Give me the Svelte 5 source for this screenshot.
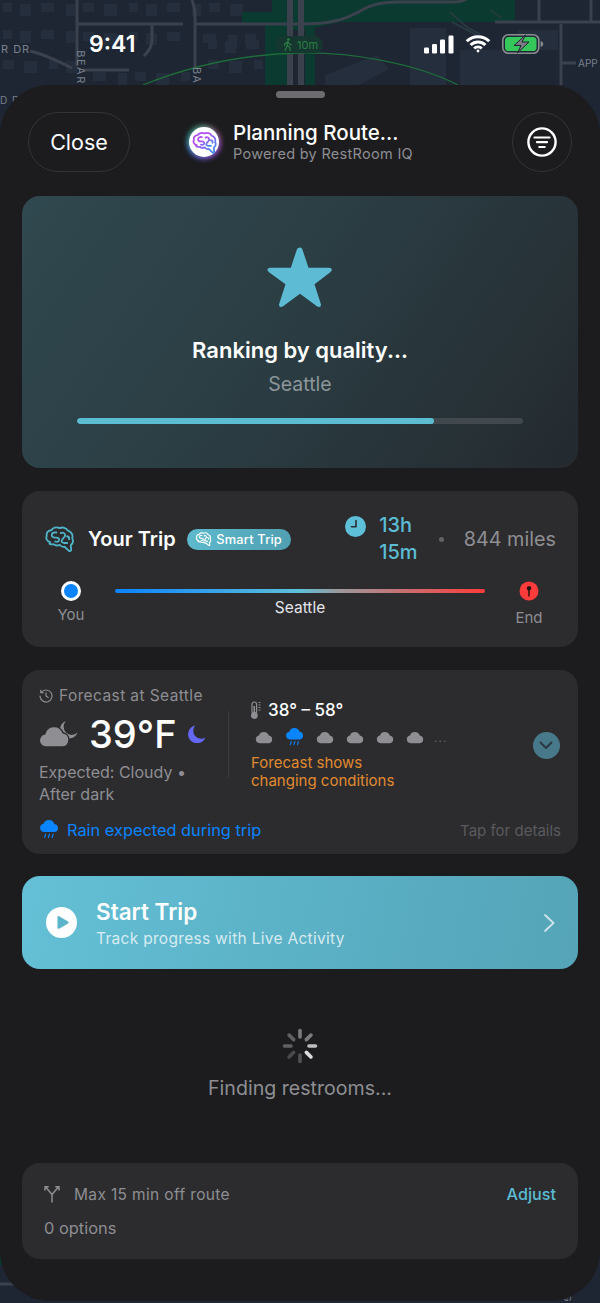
<script>
  const ticks = [
    [0, 0.42], [45, 0.42], [90, 0.72], [135, 0.85],
    [180, 0.24], [225, 0.2], [270, 0.3], [315, 0.3]
  ];
  const blocks = [];
  const rows = [[3, 0, 240], [32, 80, 190], [34, 200, 270], [30, 0, 72], [60, 0, 70], [72, 90, 190], [40, 205, 265], [60, 205, 262]];
  rows.forEach(([y, from, to], r) => {
    for (let x = from + 3, i = 0; x < to; x += 17 + ((i + r) % 3) * 4, i++) {
      blocks.push({ x, y: y + (i % 2), w: 9 + ((i + r) % 3) * 2, h: 9 + (i % 2) * 3 });
    }
  });
  const cloud = 'M6.2 16a5.2 5.2 0 0 1-.9-10.3A7 7 0 0 1 18.4 5.9 5.1 5.1 0 0 1 18.6 16z';
  const brainOutline = 'M4.500 14.500C2 14 .8 11.500 1.800 9.500 1.300 7 3 5 5.500 5 6.500 3 9.500 2 12 3.300 14.500 2.200 17.500 3 18.700 5.300 21.500 6 23 8.800 22.200 11.500 23.200 13.500 22.500 15.800 21 17l.3 3.500c.1 1-.9 1.500-1.700 1l-3.600-3.300c-1.700.3-3-.3-3.700-1.500-1.800.8-3.800.5-5-.6-1.200.3-2.300.2-3.300-.4z';
  const brainInner = 'M9.500 6.800C7.500 6.300 5.500 7.300 5.800 9.200c.2 1.500 2 1.800 3.500 1.700 1.500-.1 2.800.8 2.300 2.200-.4 1-1.800 1.300-3 .9M13 7.300c1.500-.8 3.500 0 3.500 1.700 0 1.800-2.500 2.700-2.800 4.500-.1 1 .8 1.700 2 1.700h2.500M18 9.800c1.200.3 2 1.300 1.700 2.500';
</script>

{#snippet brain(stroke, width)}
  <path d={brainOutline} fill="none" {stroke} stroke-width={width} stroke-linejoin="round" />
  <path d={brainInner} fill="none" {stroke} stroke-width={width} stroke-linecap="round" />
{/snippet}

{#snippet rainCloud(size)}
  <svg class="icon" width={size} height={size} viewBox="0 0 24 24">
    <path d="M6.200 14.500a5 5 0 0 1-.8-9.900A6.900 6.900 0 0 1 18.400 4.800a4.900 4.900 0 0 1 .3 9.700z" fill="#0a84ff" />
    <path d="M8 17l-1.200 4M12.500 17l-1.200 4M17 17l-1.200 4" stroke="#0a84ff" stroke-width="1.400" stroke-linecap="round" />
  </svg>
{/snippet}

{#snippet greyCloud()}
  <svg class="icon" width="18" height="13" viewBox="0 0 24 17"><path d={cloud} fill="#8e8e93" /></svg>
{/snippet}

<div class="screen">
  <svg class="map" width="600" height="1303" viewBox="0 0 600 1303">
    <rect width="600" height="1303" fill="#1e2634" />
    <g fill="#252e3d">
      {#each blocks as b}<rect x={b.x} y={b.y} width={b.w} height={b.h} />{/each}
      <rect x="410" y="28" width="36" height="57" />
      <rect x="460" y="50" width="60" height="35" />
      <rect x="518" y="30" width="40" height="20" />
      <path d="M325 75l52-20 12 14-30 16h-34z" />
    </g>
    <path d="M242 12h30V0h243v22H340l-25 6v57h-10v-55h-18v55h-22V24h-23z" fill="#0a3a30" />
    <g fill="none" stroke="#3b414d" stroke-width="3">
      <path d="M77 0v66M77 24H183M192 0c3 8 3 12 3 20v48M195 24h105c30 0 45-4 62-14 10-6 20-8 35-8h56c10 0 14-3 16-6M495 22h105M539 0v22M591 0v22M561 24v61M562 63h14M152 24v16c0 6-3 11-8 16M30 51c14 3 28 10 42 17M83 70h46" />
      <path d="M290 0v85M301 0v85" stroke-width="6" />
    </g>
    <path d="M450 12l18 16 12 6M452 22l30 16M490 10l12 8" fill="none" stroke="#2a3d42" stroke-width="1.500" />
    <path d="M0 1180h8v85H0z" fill="#0a3a30" />
    <path d="M0 1284h36M590 1250l10 5" stroke="#3b414d" stroke-width="3" fill="none" />
    <path d="M143 85C195 64 250 54 300 53s115 10 158 32" fill="none" stroke="#1f6b3a" stroke-width="1.300" />
    <rect x="276" y="36" width="47" height="17" rx="8.500" fill="#16372f" />
  </svg>

  <span class="maplabel dr">R DR</span>
  <span class="maplabel dd">D D</span>
  <span class="maplabel bear">BEAR</span>
  <span class="maplabel ba">BA</span>
  <span class="maplabel app">APP</span>
  <span class="maplabel ing">ING</span>
  <span class="walk">
    <svg width="10" height="13" viewBox="0 0 10 13"><circle cx="5.400" cy="1.600" r="1.400" fill="#2c7d43" /><path d="M5 3.500L4 8l-2 4.500M4.200 7.500l2.400 1.600.6 3.400M4.600 4L2 5.500 1.500 7.500M5 4l1.500 2 2 .8" fill="none" stroke="#2c7d43" stroke-width="1.200" stroke-linecap="round" /></svg>
    10m
  </span>

  <div class="status">
    <span class="time">9:41</span>
    <div class="status-icons">
      <svg width="30" height="19" viewBox="0 0 30 19" fill="#fff">
        <rect x="0" y="12.500" width="5" height="6" rx="1.200" /><rect x="8" y="9" width="5" height="9.500" rx="1.200" /><rect x="16" y="4.500" width="5" height="14" rx="1.200" /><rect x="24.500" y="0.500" width="5" height="18" rx="1.200" />
      </svg>
      <svg width="26" height="18" viewBox="0 0 26 18" fill="none" stroke="#fff" stroke-width="3">
        <path d="M1.800 6.200a16 16 0 0 1 22.400 0M5.600 10a10.600 10.600 0 0 1 14.800 0M9.200 13.500a5.500 5.500 0 0 1 7.600 0" />
        <circle cx="13" cy="16" r="1.400" fill="#fff" stroke="none" />
      </svg>
      <svg width="42" height="20" viewBox="0 0 42 20">
        <rect x="0.800" y="0.800" width="36" height="18.400" rx="5.500" fill="none" stroke="#8a8d90" stroke-width="1.600" />
        <rect x="3" y="3" width="31.500" height="14" rx="3.600" fill="#35c759" />
        <path d="M38.600 7v6c1.600-.4 2.600-1.600 2.600-3s-1-2.600-2.600-3z" fill="#8a8d90" />
        <path d="M23.500 1L12 11.500h7L15.500 19 27 8h-7z" fill="#7a7e84" stroke="#1e2634" stroke-width="1" />
      </svg>
    </div>
  </div>

  <main class="sheet">
    <div class="handle"></div>

    <header class="header">
      <button class="close">Close</button>
      <div class="title-wrap">
        <div class="logo">
          <svg width="25" height="25" viewBox="0 0 24 24">
            <defs><linearGradient id="lg" x1="0" y1="0" x2="1" y2="1"><stop offset="0.35" stop-color="#b04ff0" /><stop offset="0.95" stop-color="#3d8df5" /></linearGradient></defs>
            {@render brain('url(#lg)', 1.700)}
          </svg>
        </div>
        <div class="title-text">
          <div class="title">Planning Route...</div>
          <div class="subtitle">Powered by RestRoom IQ</div>
        </div>
      </div>
      <button class="filter" aria-label="Filter">
        <svg width="30" height="30" viewBox="0 0 30 30" fill="none" stroke="#fff" stroke-linecap="round">
          <circle cx="15" cy="15" r="13.600" stroke-width="2.400" />
          <path d="M7.500 10.500h15M10 15.200h10M12.300 20h5.400" stroke-width="2.200" />
        </svg>
      </button>
    </header>

    <section class="hero">
      <svg class="star" width="66" height="62" viewBox="0 0 66 62">
        <path d="M33 1.500c1.300 0 2 .8 2.500 2.200l6 18.100h20.300c1.800 0 3 .7 3 2 0 1-.6 1.700-1.500 2.400L47.500 38.200l6.200 19.300c.5 1.600.2 2.800-.8 3.300-1 .5-2.100 0-3.300-.9L33 47.800 16.400 59.900c-1.200.9-2.300 1.400-3.300.9-1-.5-1.300-1.700-.8-3.300l6.200-19.300L2 26.200C1.100 25.500.5 24.800.5 23.800c0-1.300 1.200-2 3-2h20.300l6-18.100C30.300 2.300 31.700 1.500 33 1.500z" fill="#5dbcd3" />
      </svg>
      <div class="hero-title">Ranking by quality...</div>
      <div class="hero-sub">Seattle</div>
      <div class="progress"><div class="progress-fill" style="width: 80%"></div></div>
    </section>

    <section class="card trip">
      <div class="trip-top">
        <svg class="icon" width="31" height="30" viewBox="0 0 24 24">{@render brain('#4fb3c9', 1.450)}</svg>
        <span class="trip-name">Your Trip</span>
        <span class="badge">
          <svg width="17" height="16" viewBox="0 0 24 24">{@render brain('#fff', 1.800)}</svg>
          Smart Trip
        </span>
        <svg class="clock" width="21" height="21" viewBox="0 0 21 21">
          <circle cx="10.500" cy="10.500" r="10.500" fill="#5ec0d8" />
          <path d="M11 4.500v6.300H6.500" fill="none" stroke="#2c2c2e" stroke-width="1.600" stroke-linecap="round" stroke-linejoin="round" />
        </svg>
        <span class="duration">13h<br />15m</span>
        <span class="dot"></span>
        <span class="miles">844 miles</span>
      </div>
      <div class="route">
        <div class="stop">
          <span class="you-dot"></span>
          <span class="stop-label">You</span>
        </div>
        <div class="line-wrap">
          <div class="line"></div>
          <div class="via">Seattle</div>
        </div>
        <div class="stop end">
          <svg class="pin" width="20" height="20" viewBox="0 0 20 20">
            <circle cx="10" cy="10" r="9.500" fill="#ff3b3b" />
            <circle cx="10" cy="7.300" r="2.200" fill="#2a1212" />
            <path d="M10 8v7" stroke="#2a1212" stroke-width="1.500" stroke-linecap="round" />
          </svg>
          <span class="stop-label">End</span>
        </div>
      </div>
    </section>

    <section class="card weather">
      <div class="weather-main">
        <div class="weather-left">
          <div class="forecast-at">
            <svg width="14" height="14" viewBox="0 0 14 14" fill="none" stroke="#8e8e93" stroke-width="1.200" stroke-linecap="round" stroke-linejoin="round">
              <path d="M2.200 3.400A6 6 0 1 1 1 7" /><path d="M1.800 1.400v2.300h2.300M7 3.800V7l2.200 1.400" />
            </svg>
            Forecast at Seattle
          </div>
          <div class="temp-row">
            <svg class="icon" width="39" height="28" viewBox="0 0 39 28">
              <path d="M27 1A9 9 0 1 0 38.500 12.500 8 8 0 0 1 27 1z" fill="#8e8e93" />
              <path d="M7 27a6.600 6.600 0 0 1-1.200-13.100A9.500 9.500 0 0 1 24 12.800 7.200 7.200 0 0 1 24 27z" fill="#8e8e93" stroke="#2c2c2e" stroke-width="1.400" />
            </svg>
            <span class="temp">39°F</span>
            <svg class="icon" width="18" height="18" viewBox="0 0 18 18">
              <path d="M7.200.5A8 8 0 0 0 17.500 12.500 9 9 0 1 1 7.200.5z" fill="#6467f2" />
            </svg>
          </div>
          <div class="expected">Expected: Cloudy •<br />After dark</div>
        </div>
        <div class="weather-right">
          <div class="range">
            <svg width="10" height="19" viewBox="0 0 10 19">
              <rect x="1" y="1" width="4.600" height="12" rx="2.300" fill="none" stroke="#8e8e93" stroke-width="1.200" />
              <circle cx="3.300" cy="14.500" r="3.400" fill="#8e8e93" />
              <rect x="2.500" y="5" width="1.600" height="9" fill="#8e8e93" />
              <path d="M7.500 1.500h2M7.500 4h2M7.500 6.500h2M7.500 9h2" stroke="#8e8e93" stroke-width="1" />
            </svg>
            38° – 58°
          </div>
          <div class="hours">
            {@render greyCloud()}
            {@render rainCloud(19)}
            {@render greyCloud()}
            {@render greyCloud()}
            {@render greyCloud()}
            {@render greyCloud()}
            <span class="more">...</span>
          </div>
          <div class="warning">Forecast shows<br />changing conditions</div>
        </div>
        <div class="expand">
          <svg width="14" height="9" viewBox="0 0 14 9" fill="none" stroke="#2a3a42" stroke-width="2" stroke-linecap="round" stroke-linejoin="round"><path d="M1.500 1.500L7 7l5.500-5.500" /></svg>
        </div>
      </div>
      <div class="weather-foot">
        <span class="rain">{@render rainCloud(20)} Rain expected during trip</span>
        <span class="tap">Tap for details</span>
      </div>
    </section>

    <button class="start">
      <svg class="icon" width="31" height="31" viewBox="0 0 31 31">
        <circle cx="15.500" cy="15.500" r="15.500" fill="#fff" />
        <path d="M11.500 10.200c0-.9.900-1.400 1.600-1l9 5.300c.7.400.7 1.500 0 1.900l-9 5.300c-.7.400-1.600-.1-1.600-1z" fill="#5cb4ca" />
      </svg>
      <span class="start-text">
        <span class="start-title">Start Trip</span>
        <span class="start-sub">Track progress with Live Activity</span>
      </span>
      <svg class="icon" width="13" height="20" viewBox="0 0 13 20" fill="none" stroke="#fff" stroke-opacity="0.7" stroke-width="1.800" stroke-linecap="round" stroke-linejoin="round"><path d="M2 2l8.500 8L2 18" /></svg>
    </button>

    <div class="loading">
      <svg width="36" height="36" viewBox="-18 -18 36 36">
        {#each ticks as [a, o]}
          <line x1="0" y1="-9" x2="0" y2="-15.500" stroke="#fff" stroke-opacity={o} stroke-width="3.600" stroke-linecap="round" transform="rotate({a})" />
        {/each}
      </svg>
      <div class="finding">Finding restrooms...</div>
    </div>

    <section class="card limit">
      <div class="limit-row">
        <span class="limit-label">
          <svg width="16" height="18" viewBox="0 0 16 18" fill="none" stroke="#8e8e93" stroke-width="1.500" stroke-linecap="round" stroke-linejoin="round">
            <path d="M8 17V9.500L2.500 3M8 9.500L13.500 3M1 5V1.800h3.200M15 5V1.800h-3.200" />
          </svg>
          Max 15 min off route
        </span>
        <span class="adjust">Adjust</span>
      </div>
      <div class="options">0 options</div>
    </section>
  </main>
</div>

<style>
  :global(body) {
    margin: 0;
    background: #1c1c1e;
  }
  .screen {
    position: relative;
    width: 600px;
    height: 1303px;
    overflow: hidden;
    font-family: Inter, "Liberation Sans", sans-serif;
    color: #fff;
  }
  .map {
    position: absolute;
    inset: 0;
  }
  .maplabel {
    position: absolute;
    font-size: 11px;
    letter-spacing: 1px;
    color: #79808c;
    line-height: 1;
    white-space: nowrap;
  }
  .dr { left: 1px; top: 44px; }
  .dd { left: 0; top: 95px; font-size: 10px; }
  .bear { left: 63px; top: 62px; transform: rotate(90deg); letter-spacing: 1.500px; }
  .ba { left: 188px; top: 70px; transform: rotate(90deg); }
  .app { left: 578px; top: 58px; font-size: 10px; letter-spacing: 0; }
  .ing { left: 560px; top: 1289px; font-size: 9px; letter-spacing: 0; transform: rotate(90deg); }
  .walk {
    position: absolute;
    left: 283px;
    top: 37px;
    height: 15px;
    display: flex;
    align-items: center;
    gap: 4px;
    font-size: 11px;
    color: #2c7d43;
  }
  .status {
    position: absolute;
    left: 89px;
    top: 30px;
    width: 455px;
    height: 28px;
    display: flex;
    justify-content: space-between;
    align-items: center;
  }
  .time {
    font-size: 23px;
    font-weight: 600;
  }
  .status-icons {
    display: flex;
    align-items: center;
    gap: 11px;
  }
  .icon { flex: none; display: block; }

  .sheet {
    position: absolute;
    left: 0;
    top: 85px;
    width: 600px;
    height: 1216px;
    box-sizing: border-box;
    padding: 0 22px;
    background: #1c1c1e;
    border-radius: 50px;
    display: flex;
    flex-direction: column;
  }
  .handle {
    width: 49px;
    height: 7px;
    border-radius: 4px;
    background: #6b6b70;
    margin: 6px auto 0;
    flex: none;
  }
  .header {
    display: flex;
    align-items: center;
    height: 60px;
    margin-top: 14px;
    padding: 0 6px;
    flex: none;
  }
  button {
    font-family: inherit;
    color: inherit;
    cursor: pointer;
  }
  .close {
    width: 102px;
    height: 60px;
    border-radius: 30px;
    border: 1px solid #333336;
    background: transparent;
    font-size: 21.500px;
    padding: 0;
  }
  .title-wrap {
    margin-left: 59px;
    display: flex;
    align-items: center;
    gap: 14px;
    flex: 1;
  }
  .logo {
    width: 30px;
    height: 30px;
    border-radius: 50%;
    background: #fff;
    display: flex;
    align-items: center;
    justify-content: center;
    box-shadow: -2px -2px 5px rgba(60, 220, 160, 0.45), 2px 2px 5px rgba(170, 80, 240, 0.6), 2px -2px 5px rgba(230, 120, 120, 0.35), -2px 2px 5px rgba(70, 130, 255, 0.55);
  }
  .title {
    font-size: 20.500px;
    font-weight: 500;
    line-height: 24px;
  }
  .subtitle {
    font-size: 14.500px;
    line-height: 18px;
    color: #8e8e93;
    letter-spacing: 0.3px;
  }
  .filter {
    width: 60px;
    height: 60px;
    border-radius: 50%;
    border: 1px solid #333336;
    background: transparent;
    padding: 0;
    display: flex;
    align-items: center;
    justify-content: center;
    flex: none;
  }

  .hero {
    margin-top: 24px;
    height: 272px;
    box-sizing: border-box;
    border-radius: 18px;
    background: linear-gradient(125deg, #30484f 0%, #2b3e44 45%, #242a2f 100%);
    display: flex;
    flex-direction: column;
    align-items: center;
    padding-top: 50px;
    flex: none;
  }
  .hero-title {
    margin-top: 28px;
    font-size: 22px;
    font-weight: 600;
    line-height: 28px;
  }
  .hero-sub {
    margin-top: 7px;
    font-size: 19.500px;
    line-height: 26px;
    color: #8c969b;
  }
  .progress {
    margin-top: 21px;
    width: 446px;
    height: 6px;
    border-radius: 3px;
    background: #42494e;
    overflow: hidden;
  }
  .progress-fill {
    height: 100%;
    border-radius: 3px;
    background: #5bbcd2;
  }

  .card {
    background: #2c2c2e;
    border-radius: 18px;
    flex: none;
    box-sizing: border-box;
  }
  .trip {
    margin-top: 23px;
    height: 156px;
    padding: 21px 22px 0 22px;
  }
  .trip-top {
    display: flex;
    align-items: center;
    height: 54px;
  }
  .trip-name {
    margin-left: 13px;
    font-size: 20px;
    font-weight: 600;
  }
  .badge {
    margin-left: 11px;
    height: 21px;
    width: 104px;
    box-sizing: border-box;
    border-radius: 11px;
    background: linear-gradient(100deg, #5ebace, #4f9fb1);
    display: flex;
    align-items: center;
    justify-content: center;
    gap: 4px;
    font-size: 12.800px;
    font-weight: 500;
    letter-spacing: 0.2px;
  }
  .clock {
    margin-left: 54.500px;
    margin-top: -25px;
    flex: none;
  }
  .duration {
    margin-left: 13px;
    font-size: 20px;
    font-weight: 500;
    line-height: 27px;
    color: #5bbcd4;
    width: 51px;
  }
  .dot {
    width: 5px;
    height: 5px;
    border-radius: 50%;
    background: #636366;
    margin-left: 9px;
    flex: none;
  }
  .miles {
    margin-left: auto;
    font-size: 19.800px;
    color: #8e8e93;
    white-space: nowrap;
  }
  .route {
    display: flex;
    margin-top: 15px;
  }
  .stop {
    width: 54px;
    flex: none;
    display: flex;
    flex-direction: column;
    align-items: center;
  }
  .stop:first-child { margin-right: 17px; }
  .stop.end { margin-left: 17px; }
  .you-dot {
    width: 20px;
    height: 20px;
    box-sizing: border-box;
    border-radius: 50%;
    border: 3px solid #fff;
    background: #0a84ff;
  }
  .stop-label {
    margin-top: 4px;
    font-size: 15px;
    line-height: 20px;
    color: #8e8e93;
  }
  .stop.end .stop-label { margin-top: 7px; }
  .pin { display: block; }
  .line-wrap {
    flex: 1;
    padding-top: 8px;
    text-align: center;
  }
  .line {
    height: 4px;
    border-radius: 2px;
    background: linear-gradient(90deg, #0a84ff 0%, #5ec0d8 50%, #9a9a9e 60%, #ff3b3b 100%);
  }
  .via {
    margin-top: 5px;
    font-size: 15.500px;
    line-height: 20px;
    color: #e5e5ea;
  }

  .weather {
    margin-top: 23px;
    height: 184px;
    padding: 16px 17px 0 17px;
    display: flex;
    flex-direction: column;
  }
  .weather-main {
    display: flex;
    height: 120px;
  }
  .weather-left { width: 189px; flex: none; }
  .forecast-at {
    display: flex;
    align-items: center;
    gap: 6px;
    font-size: 15.500px;
    letter-spacing: 0.4px;
    line-height: 20px;
    color: #8e8e93;
    white-space: nowrap;
  }
  .temp-row {
    display: flex;
    align-items: center;
    height: 44px;
    margin-top: 6px;
  }
  .temp {
    margin-left: 11px;
    margin-right: 11px;
    font-size: 38px;
    font-weight: 500;
  }
  .expected {
    margin-top: 5px;
    font-size: 16px;
    line-height: 22px;
    color: #8e8e93;
  }
  .weather-right {
    margin-top: 25px;
    height: 67px;
    padding-left: 22px;
    border-left: 1px solid #3a3a3c;
    width: 281px;
    box-sizing: border-box;
    flex: none;
  }
  .range {
    display: flex;
    align-items: center;
    gap: 7px;
    font-size: 17px;
    font-weight: 500;
    line-height: 20px;
    margin-top: -11px;
    color: #fff;
  }
  .hours {
    display: flex;
    align-items: center;
    gap: 12px;
    height: 20px;
    margin-top: 7px;
    padding-left: 4px;
  }
  .more {
    font-size: 12px;
    letter-spacing: 1px;
    color: #636366;
    margin-left: -2px;
  }
  .warning {
    margin-top: 7px;
    font-size: 15px;
    line-height: 18px;
    color: #e08a30;
    white-space: nowrap;
  }
  .expand {
    width: 27px;
    height: 27px;
    border-radius: 50%;
    background: #47798a;
    display: flex;
    align-items: center;
    justify-content: center;
    flex: none;
    margin: 46px 1.500px 0 auto;
  }
  .weather-foot {
    display: flex;
    justify-content: space-between;
    align-items: center;
    height: 24px;
    margin-top: 12px;
  }
  .rain {
    display: flex;
    align-items: center;
    gap: 8px;
    font-size: 16.350px;
    color: #0a84ff;
  }
  .tap {
    font-size: 15px;
    color: #5a5a5e;
  }

  .start {
    margin-top: 22px;
    height: 93px;
    flex: none;
    border: 0;
    border-radius: 18px;
    background: linear-gradient(100deg, #64c0d6 0%, #5bb1c6 50%, #55a4b7 100%);
    display: flex;
    align-items: center;
    padding: 0 22px 0 24px;
    text-align: left;
  }
  .start-text {
    margin-left: 19px;
    flex: 1;
    display: flex;
    flex-direction: column;
    padding-top: 2px;
  }
  .start-title {
    font-size: 22.500px;
    font-weight: 600;
    line-height: 28px;
  }
  .start-sub {
    margin-top: 2px;
    font-size: 15.500px;
    letter-spacing: 0.3px;
    line-height: 22px;
    color: rgba(255, 255, 255, 0.75);
  }

  .loading {
    flex: 1;
    display: flex;
    flex-direction: column;
    align-items: center;
    padding-top: 59px;
  }
  .finding {
    margin-top: 11px;
    font-size: 19.600px;
    line-height: 26px;
    color: #8e8e93;
  }

  .limit {
    height: 96px;
    margin-bottom: 42px;
    padding: 20px 22px 0 22px;
  }
  .limit-row {
    display: flex;
    justify-content: space-between;
    align-items: center;
    height: 22px;
  }
  .limit-label {
    display: flex;
    align-items: center;
    gap: 14px;
    font-size: 15.500px;
    letter-spacing: 0.35px;
    color: #8e8e93;
  }
  .adjust {
    font-size: 16.200px;
    font-weight: 500;
    color: #5bbcd4;
  }
  .options {
    margin-top: 12px;
    font-size: 16.400px;
    line-height: 22px;
    color: #8e8e93;
  }
</style>
